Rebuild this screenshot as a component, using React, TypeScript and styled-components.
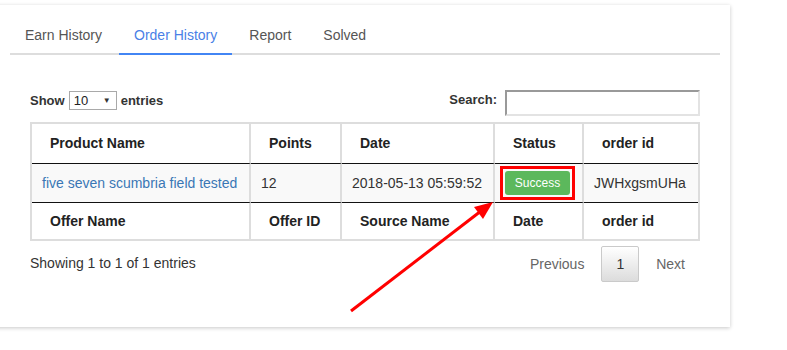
import React from 'react';
import styled, { createGlobalStyle } from 'styled-components';

const GlobalStyle = createGlobalStyle`
  body {
    margin: 0;
    background: #fff;
    font-family: "Liberation Sans", Arial, sans-serif;
    color: #333;
  }
`;

const Screen = styled.div`
  position: relative;
  width: 787px;
  height: 350px;
  overflow: hidden;
`;

const Card = styled.div`
  box-sizing: border-box;
  width: 740px;
  margin: 5px 0 0 -10px;
  padding: 8px 10px 45px 20px;
  background: #fff;
  box-shadow: 0 1px 4px rgba(0, 0, 0, 0.22);
`;

const Tabs = styled.ul`
  display: flex;
  margin: 0;
  padding: 0;
  list-style: none;
  border-bottom: 2px solid #ddd;
`;

const Tab = styled.li<{ $active?: boolean }>`
  margin: 0 2px -2px 0;
  padding: 12px 15px 8px;
  font-size: 14px;
  line-height: 20px;
  color: ${({ $active }) => ($active ? '#4a7fe6' : '#555')};
  border-bottom: 2px solid ${({ $active }) => ($active ? '#4285f4' : 'transparent')};
  cursor: pointer;
`;

const TabPane = styled.div`
  padding: 0 20px;
`;

const Controls = styled.div`
  display: flex;
  justify-content: space-between;
  align-items: flex-end;
  margin: 35px 0 6px;
`;

const LengthLabel = styled.label`
  display: flex;
  align-items: center;
  gap: 4px;
  height: 19px;
  margin-bottom: 6px;
  font-size: 13px;
  font-weight: bold;
`;

const SelectBox = styled.span`
  box-sizing: border-box;
  display: inline-flex;
  align-items: center;
  justify-content: space-between;
  width: 48px;
  height: 19px;
  padding: 0 5px 0 4px;
  border: 1px solid #a9a9a9;
  font-size: 13px;
  font-weight: normal;
  color: #222;
`;

const Caret = styled.span`
  font-size: 8px;
  color: #333;
`;

const FilterLabel = styled.label`
  display: flex;
  align-items: flex-start;
  gap: 8px;
  padding-top: 0;
  font-size: 13px;
  font-weight: bold;
  line-height: 20px;
`;

const SearchInput = styled.input`
  box-sizing: border-box;
  width: 195px;
  height: 26px;
  margin: 0;
  border: 2px solid;
  border-color: #999 #e3e3e3 #e3e3e3 #999;
  outline: none;
`;

const Table = styled.table`
  box-sizing: border-box;
  width: 670px;
  table-layout: fixed;
  border-collapse: separate;
  border-spacing: 0;
  border: 2px solid #ddd;
  font-size: 14px;
`;

const HeadCell = styled.th<{ $w?: number; $foot?: boolean }>`
  box-sizing: border-box;
  width: ${({ $w }) => ($w ? `${$w}px` : 'auto')};
  padding: ${({ $foot }) => ($foot ? '9px 18px' : '10px 18px')};
  line-height: ${({ $foot }) => ($foot ? '18px' : '19px')};
  text-align: left;
  font-weight: bold;
  color: #222;
  background: #fff;
  border-right: 2px solid #ddd;
  border-top: ${({ $foot }) => ($foot ? '1px solid #111' : 'none')};
  border-bottom: ${({ $foot }) => ($foot ? 'none' : '1px solid #111')};
  white-space: nowrap;

  &:last-child {
    border-right: none;
  }
`;

const Cell = styled.td<{ $tight?: boolean }>`
  padding: ${({ $tight }) => ($tight ? '0 5px' : '10px')};
  line-height: 18px;
  background: #f9f9f9;
  border-right: 2px solid #ddd;
  white-space: nowrap;
  vertical-align: middle;

  &:last-child {
    border-right: none;
  }
`;

const ProductLink = styled.a`
  color: #3a77b5;
  text-decoration: none;
`;

const Highlight = styled.span`
  display: inline-block;
  padding: 2px;
  border: 3px solid #ff0000;
  line-height: 0;
`;

const StatusBadge = styled.span`
  display: inline-block;
  box-sizing: border-box;
  width: 65px;
  height: 24px;
  line-height: 24px;
  border-radius: 3px;
  background: #5cb85c;
  color: #fff;
  font-size: 12px;
  text-align: center;
`;

const Footer = styled.div`
  display: flex;
  justify-content: space-between;
  align-items: center;
  margin-top: 5px;
`;

const Info = styled.div`
  padding-bottom: 3px;
  font-size: 14px;
  color: #333;
`;

const Pager = styled.div`
  display: flex;
`;

const PageButton = styled.span<{ $current?: boolean }>`
  margin-left: 2px;
  padding: 7px 14px;
  font-size: 14px;
  line-height: 20px;
  border: 1px solid ${({ $current }) => ($current ? '#cacaca' : 'transparent')};
  border-radius: 2px;
  color: ${({ $current }) => ($current ? '#333' : '#666')};
  background: ${({ $current }) => ($current ? 'linear-gradient(to bottom, #fff 0%, #dcdcdc 100%)' : 'transparent')};
  cursor: pointer;
`;

const Annotation = styled.svg`
  position: absolute;
  top: 0;
  left: 0;
  pointer-events: none;
`;

const tabs = ['Earn History', 'Order History', 'Report', 'Solved'];
const heads: [string, number?][] = [
  ['Product Name', 219],
  ['Points', 91],
  ['Date', 153],
  ['Status', 89],
  ['order id'],
];
const foots = ['Offer Name', 'Offer ID', 'Source Name', 'Date', 'order id'];

export default function App() {
  return (
    <Screen>
      <GlobalStyle />
      <Card>
        <Tabs>
          {tabs.map((t) => (
            <Tab key={t} $active={t === 'Order History'}>{t}</Tab>
          ))}
        </Tabs>
        <TabPane>
          <Controls>
            <LengthLabel>
              Show
              <SelectBox>10<Caret>▼</Caret></SelectBox>
              entries
            </LengthLabel>
            <FilterLabel>
              Search:
              <SearchInput type="search" />
            </FilterLabel>
          </Controls>
          <Table>
            <thead>
              <tr>
                {heads.map(([h, w]) => (
                  <HeadCell key={h} $w={w}>{h}</HeadCell>
                ))}
              </tr>
            </thead>
            <tbody>
              <tr>
                <Cell><ProductLink href="#">five seven scumbria field tested</ProductLink></Cell>
                <Cell>12</Cell>
                <Cell>2018-05-13 05:59:52</Cell>
                <Cell $tight>
                  <Highlight><StatusBadge>Success</StatusBadge></Highlight>
                </Cell>
                <Cell>JWHxgsmUHa</Cell>
              </tr>
            </tbody>
            <tfoot>
              <tr>
                {foots.map((f, i) => (
                  <HeadCell key={i} $foot>{f}</HeadCell>
                ))}
              </tr>
            </tfoot>
          </Table>
          <Footer>
            <Info>Showing 1 to 1 of 1 entries</Info>
            <Pager>
              <PageButton>Previous</PageButton>
              <PageButton $current>1</PageButton>
              <PageButton>Next</PageButton>
            </Pager>
          </Footer>
        </TabPane>
      </Card>
      <Annotation width="787" height="350" viewBox="0 0 787 350">
        <line x1="351" y1="311" x2="481" y2="211" stroke="#ff0000" strokeWidth="3" />
        <polygon points="493,202 483,219 474,207" fill="#ff0000" />
      </Annotation>
    </Screen>
  );
}
